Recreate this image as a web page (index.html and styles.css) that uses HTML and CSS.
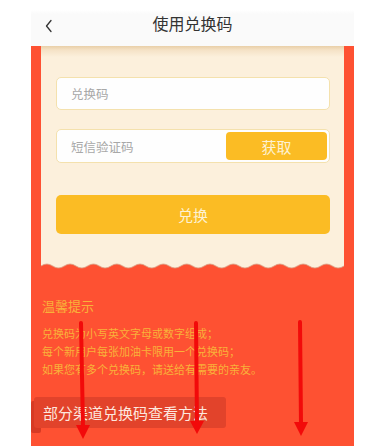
FILE: index.html
```html
<!DOCTYPE html>
<html lang="zh">
<head>
<meta charset="utf-8">
<title>使用兑换码</title>
<link rel="stylesheet" href="styles.css">
</head>
<body>
<div class="page">
  <header class="topbar">
    <svg class="back" width="10" height="14" viewBox="0 0 10 14"><path d="M7 1.5 L2.5 7 L7 12.5" fill="none" stroke="#333" stroke-width="1.3" stroke-linecap="round" stroke-linejoin="round"/></svg>
    <h1 class="title">使用兑换码</h1>
  </header>
  <main class="red">
    <section class="card">
      <div class="field"><span class="ph">兑换码</span></div>
      <div class="field sms"><span class="ph">短信验证码</span><button class="get">获取</button></div>
      <button class="submit">兑换</button>
      <svg class="wave" width="303" height="8" viewBox="0 0 303 8">
        <defs>
          <pattern id="scallop" patternUnits="userSpaceOnUse" width="23.31" height="8">
            <path d="M0 0 L23.31 0 L23.31 4 Q17.48 8 11.65 4 Q5.83 0 0 4 Z" fill="#fcf0dc"/>
            <path d="M0 4 Q5.83 0 11.65 4 Q17.48 8 23.31 4" fill="none" stroke="#d9a084" stroke-width="0.8"/>
          </pattern>
        </defs>
        <rect x="0" y="0" width="303" height="8" fill="url(#scallop)"/>
      </svg>
    </section>
    <section class="tips">
      <h2 class="tips-title">温馨提示</h2>
      <p class="tips-text">兑换码为小写英文字母或数字组成；<br>每个新用户每张加油卡限用一个兑换码；<br>如果您有多个兑换码，请送给有需要的亲友。</p>
    </section>
    <div class="channel">部分渠道兑换码查看方法</div>
  </main>
  <svg class="arrows" width="382" height="446" viewBox="0 0 382 446">
    <g stroke="#f20a0a" stroke-width="4" stroke-linecap="round">
      <line x1="81" y1="323" x2="83" y2="428"/>
      <line x1="196" y1="323" x2="197" y2="424"/>
      <line x1="300" y1="322" x2="301" y2="425"/>
    </g>
    <g fill="#f20a0a">
      <path d="M76 425 L90 425 L83 439 Z"/>
      <path d="M190 421 L204 421 L197 434 Z"/>
      <path d="M294 422 L308 422 L301 436 Z"/>
    </g>
  </svg>
</div>
</body>
</html>
```
FILE: styles.css
```css
html, body {
  margin: 0;
  padding: 0;
  background: #ffffff;
}
body {
  width: 382px;
  height: 446px;
  overflow: hidden;
  font-family: "Noto Sans CJK SC", "Noto Sans", sans-serif;
}
.page {
  width: 323px;
  margin-left: 31px;
  height: 446px;
  display: flex;
  flex-direction: column;
}
.topbar {
  height: 46px;
  flex: none;
  background: linear-gradient(#ffffff 0, #ffffff 10px, #fafafa 14px, #fafafa 100%);
  display: flex;
  align-items: center;
  justify-content: center;
  position: relative;
}
.back {
  position: absolute;
  left: 13px;
  top: 19px;
}
.title {
  margin: 0;
  font-size: 16px;
  font-weight: 400;
  color: #333333;
  line-height: 20px;
  margin-top: -1px;
}
.red {
  flex: 1;
  background: #fe5132;
  padding: 0 10px;
  display: flex;
  flex-direction: column;
  position: relative;
  z-index: 0;
}
.card {
  background: linear-gradient(#e9cfa8 0, #f5e2c6 4px, #fcf0dc 11px, #fcf0dc 100%);
  background-size: 100% calc(100% - 8px);
  background-repeat: no-repeat;
  padding: 31px 14px 0 15px;
  display: flex;
  flex-direction: column;
}
.field {
  height: 33px;
  box-sizing: border-box;
  border: 1px solid #f4e1ad;
  border-radius: 5px;
  background: #fefefe;
  display: flex;
  align-items: center;
  padding-left: 14px;
  margin-bottom: 19px;
}
.field.sms {
  height: 34px;
  padding-right: 2px;
  justify-content: space-between;
  margin-bottom: 32px;
}
.ph {
  font-size: 12.5px;
  color: #a8a8a8;
}
.get {
  width: 101px;
  height: 28px;
  border: none;
  border-radius: 4px;
  background: #fbbc24;
  color: #fdf2d3;
  font-family: inherit;
  font-size: 15px;
  padding: 0;
}
.submit {
  height: 39px;
  border: none;
  border-radius: 5px;
  background: #fbbc24;
  color: #fdf2d3;
  font-family: inherit;
  font-size: 15px;
  padding: 0;
  margin-bottom: 28px;
}
.wave {
  display: block;
  margin: 0 -14px 0 -15px;
}
.tips {
  padding-left: 1px;
  margin-top: 27px;
}
.tips-title {
  margin: 0;
  font-size: 13px;
  font-weight: 400;
  line-height: 18px;
  color: #f9b13a;
}
.tips-text {
  margin: 9px 0 0;
  font-size: 11px;
  line-height: 18px;
  color: #f9b13a;
}
.channel {
  align-self: flex-start;
  margin: 19px 0 0 -7px;
  height: 31px;
  padding: 0 18px 0 9px;
  background: #e2432b;
  border-radius: 3px;
  color: #fde7df;
  font-size: 15px;
  line-height: 31px;
  position: relative;
}
.channel::before {
  content: "";
  position: absolute;
  left: -3px;
  top: 4px;
  width: 10px;
  height: 32px;
  background: #d73a24;
  border-radius: 2px;
  z-index: -1;
}
.arrows {
  position: absolute;
  left: 0;
  top: 0;
  pointer-events: none;
}
```
